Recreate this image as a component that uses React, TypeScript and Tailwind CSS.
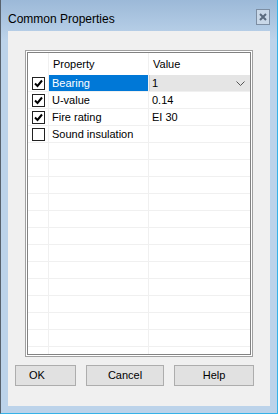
type Row = { checked: boolean; name: string; value: string }

const rows: Row[] = [
  { checked: true, name: "Bearing", value: "1" },
  { checked: true, name: "U-value", value: "0.14" },
  { checked: true, name: "Fire rating", value: "EI 30" },
  { checked: false, name: "Sound insulation", value: "" },
]

const emptyRows = Array.from({ length: 14 })

function CheckBox({ checked }: { checked: boolean }) {
  return (
    <div className="flex h-[13px] w-[13px] items-center justify-center border border-[#222222] bg-white">
      {checked && (
        <svg width="11" height="11" viewBox="0 0 11 11">
          <path d="M2 5.5 L4.5 8 L9 2.5" fill="none" stroke="black" strokeWidth="2" />
        </svg>
      )}
    </div>
  )
}

export default function App() {
  return (
    <div className="flex h-[414px] w-[278px] flex-col border-b border-l border-r border-b-[#35b2e8] border-l-[#58626d] border-r-[#35b2e8] bg-[linear-gradient(to_bottom,#9cb9d8,#bcd3ea_40px)] pb-[7px] pl-[7px] pr-[7px] font-['Liberation_Sans',Arial,sans-serif] text-black">
      <div className="flex h-[31px] items-start">
        <div className="mt-[11px] text-[12px] leading-[16px]">Common Properties</div>
        <div className="ml-auto mt-[9px] flex h-[16px] w-[14px] items-center justify-center border border-[#7d8ea3] bg-[#c9d8e8] text-[#5a6a7e]">
          <svg width="8" height="8" viewBox="0 0 8 8">
            <path d="M1 1 L7 7 M7 1 L1 7" stroke="currentColor" strokeWidth="2" />
          </svg>
        </div>
      </div>

      <div className="flex flex-1 flex-col bg-[#f0f0f0]">
        <div className="ml-[17px] mt-[19px] h-[307px] w-[228px] border border-[#a0a0a0] bg-white p-px">
          <div className="h-full overflow-hidden border border-[#828282] bg-white text-[11px]">
            <div className="flex h-[22px]">
              <div className="w-[21px] border-r border-[#f0f0f0]" />
              <div className="flex w-[100px] items-center border-r border-[#f0f0f0] pl-[4px]">Property</div>
              <div className="flex flex-1 items-center pl-[4px]">Value</div>
            </div>
            {rows.map((r, i) => (
              <div key={r.name} className="flex h-[17px] border-b border-[#f0f0f0]">
                <div className="flex w-[21px] items-center justify-center border-r border-[#f0f0f0]">
                  <CheckBox checked={r.checked} />
                </div>
                <div
                  className={
                    i === 0
                      ? "flex w-[100px] items-center border-r border-[#f0f0f0] bg-[#0078d7] pl-[3px] text-white"
                      : "flex w-[100px] items-center border-r border-[#f0f0f0] pl-[3px]"
                  }
                >
                  {r.name}
                </div>
                {i === 0 ? (
                  <div className="flex flex-1 items-center border-l border-[#d0d0d0] bg-[#e5e5e5] pl-[2px] pr-[5px]">
                    <span>{r.value}</span>
                    <svg className="ml-auto" width="9" height="5" viewBox="0 0 9 5">
                      <path d="M0.5 0.5 L4.5 4.5 L8.5 0.5" fill="none" stroke="#555555" strokeWidth="1" />
                    </svg>
                  </div>
                ) : (
                  <div className="flex flex-1 items-center pl-[3px]">{r.value}</div>
                )}
              </div>
            ))}
            {emptyRows.map((_, i) => (
              <div key={i} className="flex h-[17px] border-b border-[#f0f0f0]">
                <div className="w-[21px] border-r border-[#f0f0f0]" />
                <div className="w-[100px] border-r border-[#f0f0f0]" />
                <div className="flex-1" />
              </div>
            ))}
          </div>
        </div>

        <div className="mt-[8px] flex gap-[10px] pl-[7px] text-[11px]">
          <button className="h-[21px] w-[61px] border border-[#adadad] bg-[#e1e1e1] pl-[13px] text-left">OK</button>
          <button className="h-[21px] w-[78px] border border-[#adadad] bg-[#e1e1e1]">Cancel</button>
          <button className="h-[21px] w-[80px] border border-[#adadad] bg-[#e1e1e1]">Help</button>
        </div>
      </div>
    </div>
  )
}
